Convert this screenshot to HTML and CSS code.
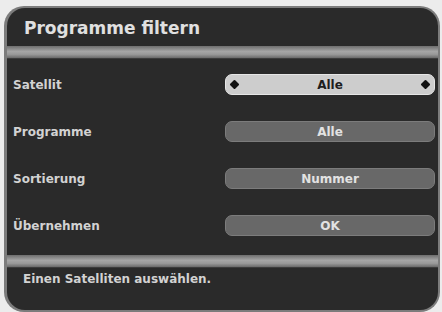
FILE: index.html
```html
<!DOCTYPE html>
<html>
<head>
<meta charset="utf-8">
<link rel="stylesheet" href="styles.css">
</head>
<body>
<div class="frame">
  <div class="title">Programme filtern</div>
  <div class="band"></div>
  <div class="main">
    <div class="row">
      <div class="label">Satellit</div>
      <div class="value selected"><span class="dia"></span><span>Alle</span><span class="dia"></span></div>
    </div>
    <div class="row">
      <div class="label">Programme</div>
      <div class="value"><span>Alle</span></div>
    </div>
    <div class="row">
      <div class="label">Sortierung</div>
      <div class="value"><span>Nummer</span></div>
    </div>
    <div class="row">
      <div class="label">Übernehmen</div>
      <div class="value"><span>OK</span></div>
    </div>
  </div>
  <div class="band"></div>
  <div class="footer">Einen Satelliten auswählen.</div>
</div>
</body>
</html>
```
FILE: styles.css
```css
html, body {
  margin: 0;
  padding: 0;
  background: #ececec;
  width: 442px;
  height: 312px;
  overflow: hidden;
  font-family: "DejaVu Sans", sans-serif;
}
.frame {
  margin: 6px 2px 0 4px;
  height: 306px;
  box-sizing: border-box;
  background: #7c7c7c;
  border-radius: 20px;
  padding: 2px 2px 2px 3px;
  display: flex;
  flex-direction: column;
}
.title {
  height: 38px;
  background: #2a2a2a;
  border-radius: 18px 18px 0 0;
  padding-left: 17px;
  font-weight: bold;
  font-size: 17px;
  line-height: 40px;
  color: #e0e0e0;
  box-sizing: border-box;
}
.band {
  height: 12px;
  background: linear-gradient(#6e6e6e, #a6a6a6 45%, #999 70%, #6a6a6a);
}
.main {
  height: 197px;
  background: #2a2a2a;
  border-top: 1px solid #3c3c3c;
  box-sizing: border-box;
  padding: 15px 3px 0 6px;
  display: flex;
  flex-direction: column;
  gap: 26px;
}
.row {
  display: flex;
  align-items: center;
  height: 21px;
}
.label {
  flex: 1;
  font-weight: bold;
  font-size: 12px;
  color: #d2d2d2;
}
.value {
  width: 210px;
  height: 21px;
  box-sizing: border-box;
  border-radius: 7px;
  background: #686868;
  border: 1px solid #7c7c7c;
  color: #e2e2e2;
  font-weight: bold;
  font-size: 12px;
  display: flex;
  align-items: center;
  justify-content: center;
}
.value.selected {
  background: #cdcdcd;
  border-color: #e6e6e6;
  color: #1e1e1e;
  justify-content: space-between;
  padding: 0 5px;
}
.dia {
  width: 7px;
  height: 7px;
  background: #111;
  transform: rotate(45deg);
  border-radius: 1px;
}
.footer {
  flex: 1;
  background: #2a2a2a;
  border-top: 1px solid #3c3c3c;
  border-radius: 0 0 18px 18px;
  padding: 4px 0 0 16px;
  font-weight: bold;
  font-size: 12px;
  color: #d2d2d2;
}
```
